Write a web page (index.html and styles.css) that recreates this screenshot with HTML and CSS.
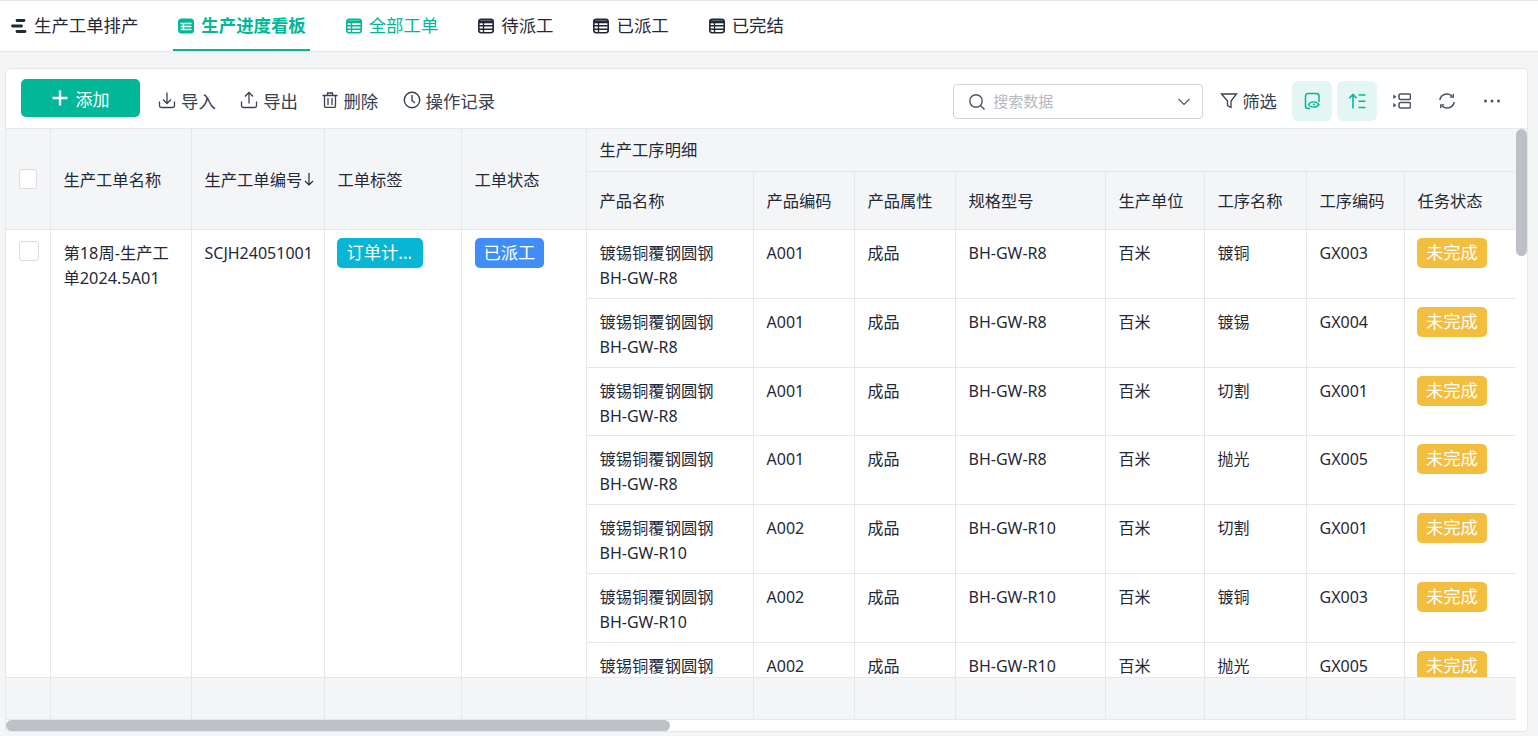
FILE: index.html
```html
<!DOCTYPE html>
<html lang="zh">
<head>
<meta charset="utf-8">
<title>生产进度看板</title>
<link rel="stylesheet" href="styles.css">
</head>
<body>
<nav class="tabs">
  <a class="tab"><svg class="ico16" viewBox="0 0 16 16"><path d="M6 2.500h7M1.500 8h9M6 13.500h8" fill="none" stroke="currentColor" stroke-width="2.800" stroke-linecap="round"/></svg><span class="tab-text">生产工单排产</span></a>
  <a class="tab tab-active"><svg class="ico16" viewBox="0 0 16 16"><rect x="0" y=".5" width="16" height="15" rx="3.500" fill="currentColor"/><path d="M2.500 5.500h11M2.500 8.500h11M2.500 11.500h11M5.500 5v7" stroke="#fff" stroke-width="1.300" fill="none"/></svg><span class="tab-text">生产进度看板</span></a>
  <a class="tab tab-hover"><svg class="ico16" viewBox="0 0 16 16"><rect x=".8" y="1.300" width="14.400" height="13.400" rx="2.500" fill="none" stroke="currentColor" stroke-width="1.600"/><path d="M1 3.800h14" stroke="currentColor" stroke-width="3"/><path d="M1 7.800h14M1 11.300h14M5.500 4v10" stroke="currentColor" stroke-width="1.400" fill="none"/></svg><span class="tab-text">全部工单</span></a>
  <a class="tab"><svg class="ico16" viewBox="0 0 16 16"><rect x=".8" y="1.300" width="14.400" height="13.400" rx="2.500" fill="none" stroke="currentColor" stroke-width="1.600"/><path d="M1 3.800h14" stroke="currentColor" stroke-width="3"/><path d="M1 7.800h14M1 11.300h14M5.500 4v10" stroke="currentColor" stroke-width="1.400" fill="none"/></svg><span class="tab-text">待派工</span></a>
  <a class="tab"><svg class="ico16" viewBox="0 0 16 16"><rect x=".8" y="1.300" width="14.400" height="13.400" rx="2.500" fill="none" stroke="currentColor" stroke-width="1.600"/><path d="M1 3.800h14" stroke="currentColor" stroke-width="3"/><path d="M1 7.800h14M1 11.300h14M5.500 4v10" stroke="currentColor" stroke-width="1.400" fill="none"/></svg><span class="tab-text">已派工</span></a>
  <a class="tab"><svg class="ico16" viewBox="0 0 16 16"><rect x=".8" y="1.300" width="14.400" height="13.400" rx="2.500" fill="none" stroke="currentColor" stroke-width="1.600"/><path d="M1 3.800h14" stroke="currentColor" stroke-width="3"/><path d="M1 7.800h14M1 11.300h14M5.500 4v10" stroke="currentColor" stroke-width="1.400" fill="none"/></svg><span class="tab-text">已完结</span></a>
</nav>

<main class="main">
  <section class="card">
    <div class="toolbar">
      <button class="add-btn"><svg class="ico16" viewBox="0 0 16 16"><path d="M8 .5v15M.5 8h15" stroke="#fff" stroke-width="2.400" fill="none"/></svg>添加</button>
      <div class="actions">
        <a class="action"><svg class="ico18" viewBox="0 0 18 18" fill="none" stroke="currentColor" stroke-width="1.300"><path d="M1.500 10.500v4.200a1.800 1.800 0 0 0 1.800 1.800h11.400a1.800 1.800 0 0 0 1.800-1.800v-4.200"/><path d="M9 1.500V12.500M5 8.500l4 4 4-4"/></svg>导入</a>
        <a class="action"><svg class="ico18" viewBox="0 0 18 18" fill="none" stroke="currentColor" stroke-width="1.300"><path d="M1.500 10.500v4.200a1.800 1.800 0 0 0 1.800 1.800h11.400a1.800 1.800 0 0 0 1.800-1.800v-4.200"/><path d="M9 12.500V1.500M5 5.500l4-4 4 4"/></svg>导出</a>
        <a class="action"><svg class="ico16" viewBox="0 0 16 16" fill="none" stroke="currentColor" stroke-width="1.300"><path d="M.5 3.500h15M5.500 3.500V1h5v2.500M2.500 3.500v10.800a1.200 1.200 0 0 0 1.200 1.200h8.600a1.200 1.200 0 0 0 1.200-1.200V3.500M6 6v7M10 6v7"/></svg>删除</a>
        <a class="action"><svg class="ico18" viewBox="0 0 18 18" fill="none" stroke="currentColor" stroke-width="1.400"><circle cx="9" cy="9" r="7.700"/><path d="M9 4v5.500l3 2.500"/></svg>操作记录</a>
      </div>
      <div class="tools">
        <div class="search">
          <svg class="ico18" viewBox="0 0 18 18" fill="none" stroke="#4b5563" stroke-width="1.400"><circle cx="8" cy="8" r="6.200"/><path d="m12.500 12.500 4 4"/></svg>
          <span class="placeholder">搜索数据</span>
          <svg class="chevron" viewBox="0 0 12 8" fill="none" stroke="#4b5563" stroke-width="1.200"><path d="m.5 1 5.500 5.500L11.500 1"/></svg>
        </div>
        <a class="action filter"><svg class="ico18" viewBox="0 0 18 18" fill="none" stroke="currentColor" stroke-width="1.300"><path d="M1.500 2h15l-5.500 7v6.500L7.500 13.500V9z"/></svg>筛选</a>
        <div class="icon-btns">
          <span class="icon-btn icon-btn-on"><svg class="ico18" viewBox="0 0 18 18" fill="none" stroke="currentColor" stroke-width="1.500"><path d="M7 16.500H5a2.500 2.500 0 0 1-2.500-2.500V4A2.500 2.500 0 0 1 5 1.500h8.500A2.500 2.500 0 0 1 16 4v6"/><path d="M5.500 12.500c2-3.500 8-3.500 10.500 0-2.500 3.500-8.500 3.500-10.500 0z" stroke-width="1.300"/><circle cx="10.800" cy="12.500" r="1" fill="currentColor" stroke="none"/></svg></span>
          <span class="icon-btn icon-btn-on"><svg class="ico18" viewBox="0 0 18 18" fill="none" stroke="currentColor" stroke-width="1.600"><path d="M5 16.500V2.500M1.300 6.200 5 2.500l3.700 3.700M10.500 3h7M10.500 9.300h7M10.500 15.500h7"/></svg></span>
          <span class="icon-btn"><svg class="ico18" viewBox="0 0 18 18" fill="none" stroke="currentColor" stroke-width="1.600"><rect x="6" y="2" width="11.500" height="5.500" rx="1.500"/><rect x="6" y="10.500" width="11.500" height="5.500" rx="1.500"/><path d="M.5 3 3.200 4.800.5 6.500zM.5 11.500l2.700 1.800-2.700 1.700z" fill="currentColor" stroke-width=".6"/></svg></span>
          <span class="icon-btn"><svg class="ico18" viewBox="0 0 18 18" fill="none" stroke="currentColor" stroke-width="1.500"><path d="M1.800 8A7.300 7.300 0 0 1 14.500 4.500M16.200 10A7.300 7.300 0 0 1 3.500 13.500"/><path d="M11.800 5.200h3.500V1.800M6.200 12.800H2.700v3.400" stroke-width="1.300"/></svg></span>
          <span class="icon-btn"><svg class="ico18" viewBox="0 0 18 18" fill="currentColor"><circle cx="2.500" cy="9" r="1.500"/><circle cx="9" cy="9" r="1.500"/><circle cx="15.500" cy="9" r="1.500"/></svg></span>
        </div>
      </div>
    </div>

    <div class="table-wrap">
      <div class="grid-table table-head">
        <div class="th span-2 check-cell"><span class="checkbox"></span></div>
        <div class="th span-2">生产工单名称</div>
        <div class="th span-2 sort-cell">生产工单编号<svg class="sort-ico" viewBox="0 0 10 14" fill="none" stroke="currentColor" stroke-width="1.200"><path d="M5 1v12M1 9l4 4 4-4"/></svg></div>
        <div class="th span-2">工单标签</div>
        <div class="th span-2">工单状态</div>
        <div class="th group">生产工序明细</div>
        <div class="th">产品名称</div><div class="th">产品编码</div><div class="th">产品属性</div><div class="th">规格型号</div><div class="th">生产单位</div><div class="th">工序名称</div><div class="th">工序编码</div><div class="th">任务状态</div>
      </div>

      <div class="table-body">
        <div class="grid-table body-grid">
          <div class="td span-all"><span class="checkbox"></span></div>
          <div class="td span-all cn">第18周-生产工单2024.5A01</div>
          <div class="td span-all">SCJH24051001</div>
          <div class="td span-all tag-cell"><span class="tag tag-cyan">订单计...</span></div>
          <div class="td span-all tag-cell"><span class="tag tag-blue">已派工</span></div>

          <div class="td"><span class="cn">镀锡铜覆钢圆钢</span><br>BH-GW-R8</div><div class="td">A001</div><div class="td">成品</div><div class="td">BH-GW-R8</div><div class="td">百米</div><div class="td">镀铜</div><div class="td">GX003</div><div class="td tag-cell"><span class="tag tag-yellow">未完成</span></div>
          <div class="td"><span class="cn">镀锡铜覆钢圆钢</span><br>BH-GW-R8</div><div class="td">A001</div><div class="td">成品</div><div class="td">BH-GW-R8</div><div class="td">百米</div><div class="td">镀锡</div><div class="td">GX004</div><div class="td tag-cell"><span class="tag tag-yellow">未完成</span></div>
          <div class="td"><span class="cn">镀锡铜覆钢圆钢</span><br>BH-GW-R8</div><div class="td">A001</div><div class="td">成品</div><div class="td">BH-GW-R8</div><div class="td">百米</div><div class="td">切割</div><div class="td">GX001</div><div class="td tag-cell"><span class="tag tag-yellow">未完成</span></div>
          <div class="td"><span class="cn">镀锡铜覆钢圆钢</span><br>BH-GW-R8</div><div class="td">A001</div><div class="td">成品</div><div class="td">BH-GW-R8</div><div class="td">百米</div><div class="td">抛光</div><div class="td">GX005</div><div class="td tag-cell"><span class="tag tag-yellow">未完成</span></div>
          <div class="td"><span class="cn">镀锡铜覆钢圆钢</span><br>BH-GW-R10</div><div class="td">A002</div><div class="td">成品</div><div class="td">BH-GW-R10</div><div class="td">百米</div><div class="td">切割</div><div class="td">GX001</div><div class="td tag-cell"><span class="tag tag-yellow">未完成</span></div>
          <div class="td"><span class="cn">镀锡铜覆钢圆钢</span><br>BH-GW-R10</div><div class="td">A002</div><div class="td">成品</div><div class="td">BH-GW-R10</div><div class="td">百米</div><div class="td">镀铜</div><div class="td">GX003</div><div class="td tag-cell"><span class="tag tag-yellow">未完成</span></div>
          <div class="td"><span class="cn">镀锡铜覆钢圆钢</span><br>BH-GW-R10</div><div class="td">A002</div><div class="td">成品</div><div class="td">BH-GW-R10</div><div class="td">百米</div><div class="td">抛光</div><div class="td">GX005</div><div class="td tag-cell"><span class="tag tag-yellow">未完成</span></div>
        </div>
      </div>

      <div class="grid-table table-foot">
        <div class="tf"></div><div class="tf"></div><div class="tf"></div><div class="tf"></div><div class="tf"></div><div class="tf"></div><div class="tf"></div><div class="tf"></div><div class="tf"></div><div class="tf"></div><div class="tf"></div><div class="tf"></div><div class="tf"></div>
      </div>

      <div class="scroll-v"></div>
      <div class="scroll-h"></div>
    </div>
  </section>
</main>
</body>
</html>
```

FILE: styles.css
```css
* { box-sizing: border-box; }

html, body { height: 100%; }

body {
  margin: 0;
  height: 736px;
  overflow: hidden;
  display: flex;
  flex-direction: column;
  background: #f4f5f7;
  color: #1f2937;
  font-family: "Noto Sans", "Noto Sans CJK SC", sans-serif;
  font-size: 16px;
}

.ico16 { width: 16px; height: 16px; flex: none; }
.ico18 { width: 18px; height: 18px; flex: none; }

/* tabs */
.tabs {
  flex: none;
  height: 52px;
  display: flex;
  gap: 30.500px;
  padding-left: 6px;
  background: #fff;
  border-top: 1px solid #e5e7eb;
  border-bottom: 1px solid #e5e7eb;
  font-size: 17.400px;
}

.tab {
  display: flex;
  align-items: center;
  gap: 7px;
  padding: 0 4.500px 0 5px;
  color: #1f2937;
  white-space: nowrap;
}

.tab-text { margin-bottom: 3px; }
.tab .ico16 { margin-bottom: 1px; }

.tab-active {
  color: #00b898;
  font-weight: 700;
  box-shadow: inset 0 -2px 0 #00b898;
}

.tab-hover { color: #00b898; }

/* card */
.main {
  flex: 1;
  min-height: 0;
  padding: 16px 10px 4px 5px;
  display: flex;
}

.card {
  flex: 1;
  min-width: 0;
  display: flex;
  flex-direction: column;
  background: #fff;
  border: 1px solid #e5e7eb;
  border-radius: 4px;
  overflow: hidden;
}

/* toolbar */
.toolbar {
  flex: none;
  height: 60px;
  display: flex;
  align-items: center;
  padding: 0 15px;
  border-bottom: 1px solid #e5e7eb;
}

.add-btn {
  width: 119px;
  height: 38px;
  margin-top: -1px;
  display: flex;
  align-items: center;
  justify-content: center;
  gap: 8px;
  border: 0;
  border-radius: 5px;
  background: #00b898;
  color: #fff;
  font: inherit;
  font-size: 17px;
}

.actions {
  display: flex;
  gap: 24.400px;
  margin-left: 18px;
  margin-top: 3px;
}

.action {
  display: flex;
  align-items: center;
  gap: 5px;
  font-size: 17.400px;
  white-space: nowrap;
  color: #374151;
}

.tools {
  margin-left: auto;
  margin-top: 4px;
  display: flex;
  align-items: center;
}

.search {
  width: 250px;
  height: 35px;
  margin-top: 2px;
  display: flex;
  align-items: center;
  padding: 0 12px 0 14px;
  border: 1px solid #d1d5db;
  border-radius: 4px;
}

.placeholder {
  margin-left: 7px;
  margin-bottom: 2px;
  flex: 1;
  color: #b4b8bf;
  font-size: 15px;
}

.chevron { width: 12px; height: 8px; }

.filter { margin-left: 17px; gap: 4px; }

.icon-btns {
  display: flex;
  gap: 5px;
  margin-left: 15px;
}

.icon-btn {
  width: 40px;
  height: 40px;
  display: flex;
  align-items: center;
  justify-content: center;
  border-radius: 6px;
  color: #4b5563;
}

.icon-btn-on {
  background: #e4f6f3;
  color: #00b898;
}

/* table */
.table-wrap {
  position: relative;
  flex: 1;
  min-height: 0;
  padding: 0 11px 11px 0;
  display: flex;
  flex-direction: column;
}

.grid-table {
  display: grid;
  grid-template-columns: 45px 141px 133px 137px 125px 167px 101px 101px 150px 99px 102px 98px 111px;
}

.table-head {
  flex: none;
  grid-template-rows: 42px 58px;
  background: #f4f5f7;
  border-bottom: 1px solid #e5e7eb;
  color: #1f2937;
}

.th {
  display: flex;
  align-items: center;
  padding: 0 12.500px;
  border-right: 1px solid #e5e7eb;
  white-space: nowrap;
  font-size: 16.300px;
}

.th:nth-child(n+6) { padding-bottom: 2px; }
.th:nth-child(n+7) { border-top: 1px solid #e5e7eb; }
.th:last-child { border-right: 0; }

.span-2 { grid-row: span 2; }
.group { grid-column: 6 / -1; border-right: 0; }

.check-cell { padding: 0 13px; }

.sort-cell { padding-right: 0; }
.sort-ico { width: 10px; height: 14px; margin-left: 2px; flex: none; }

.checkbox {
  display: block;
  width: 20px;
  height: 20px;
  background: #fff;
  border: 1px solid #d9dce1;
  border-radius: 3px;
}

.table-body {
  flex: 1;
  min-height: 0;
  overflow: hidden;
}

.body-grid {
  grid-template-rows: repeat(7, 68.800px);
}

.td {
  padding: 11px 12.500px 0;
  border-right: 1px solid #e5e7eb;
  border-bottom: 1px solid #e5e7eb;
  line-height: 25px;
  font-size: 16px;
  overflow: hidden;
}

.td:nth-child(8n+13) { border-right: 0; }

.cn { font-size: 16.300px; }

.span-all { grid-row: span 7; }

.td.span-all:first-child { padding-left: 13px; }

.tag-cell { padding-top: 8px; line-height: 30px; }

.tag {
  display: inline-block;
  height: 30px;
  padding: 0 9px;
  border-radius: 5px;
  color: #fff;
  font-size: 17.300px;
  line-height: 29px;
  white-space: nowrap;
}

.tag-cyan { background: #06b6d4; padding: 0 11px 0 10px; margin-left: -1px; }
.tag-blue { background: #3f8ef7; }
.tag-yellow { background: #f3bd3d; margin-left: -1px; padding: 0 9.500px; }

.table-foot {
  flex: none;
  height: 43px;
  background: #f4f5f7;
  border-top: 1px solid #e5e7eb;
  border-bottom: 1px solid #e5e7eb;
}

.tf { border-right: 1px solid #e5e7eb; }
.tf:last-child { border-right: 0; }

.scroll-v {
  position: absolute;
  top: 0;
  right: 0;
  width: 11px;
  height: 127px;
  border-radius: 6px;
  background: #bdc0c6;
}

.scroll-h {
  position: absolute;
  left: 0;
  bottom: 0;
  width: 664px;
  height: 11px;
  border-radius: 6px;
  background: #bdc0c6;
}
```
